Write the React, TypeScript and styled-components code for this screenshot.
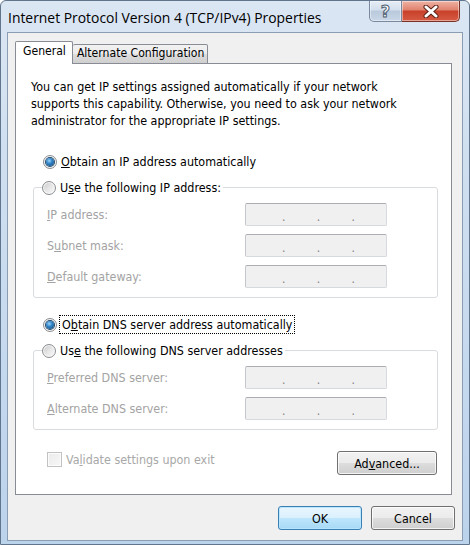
import React from "react";
import styled, { createGlobalStyle } from "styled-components";

const UI = `"DejaVu Sans Condensed", "DejaVu Sans", Tahoma, sans-serif`;

const Global = createGlobalStyle`
  html, body { margin: 0; padding: 0; background: #ffffff; }
  body { width: 470px; height: 545px; overflow: hidden; font-family: ${UI}; }
  * { box-sizing: border-box; }
`;

const Window = styled.div`
  width: 470px;
  height: 545px;
  display: flex;
  flex-direction: column;
  background: linear-gradient(180deg, #dbe6f3 0%, #cfdff0 30%, #bcd3ec 100%);
  border: 1px solid #61758d;
  border-radius: 6px 6px 0 0;
  padding: 0 6px 3px 6px;
`;

const TitleBar = styled.div`
  height: 31px;
  display: flex;
  align-items: flex-start;
  flex-shrink: 0;
`;

const Title = styled.div`
  margin: 7px 0 0 1px;
  font-family: "Open Sans", "Noto Sans", sans-serif;
  font-size: 13.9px;
  color: #000;
  white-space: nowrap;
`;

const Captions = styled.div`
  margin-left: auto;
  margin-right: 3px;
  display: flex;
`;

const CapButton = styled.div<{ $kind: "help" | "close" }>`
  height: 21px;
  width: ${(p) => (p.$kind === "help" ? "33px" : "58px")};
  display: flex;
  align-items: center;
  justify-content: center;
  border: 1px solid ${(p) => (p.$kind === "help" ? "#7a8a9e" : "#7a3226")};
  border-top: none;
  border-left: ${(p) => (p.$kind === "help" ? "1px solid #7a8a9e" : "none")};
  border-radius: ${(p) => (p.$kind === "help" ? "0 0 0 5px" : "0 0 5px 0")};
  background: ${(p) =>
    p.$kind === "help"
      ? "linear-gradient(180deg, #e6edf6 0%, #d3dfec 45%, #b9cadc 50%, #c9d7e7 100%)"
      : "linear-gradient(180deg, #eeb3a4 0%, #e0826d 45%, #c8402a 50%, #d65a42 100%)"};
  box-shadow: inset 0 0 0 1px rgba(255, 255, 255, 0.45);
`;

const HelpGlyph = styled.span`
  font-family: "DejaVu Sans", sans-serif;
  font-weight: bold;
  font-size: 16px;
  line-height: 1;
  color: #ffffff;
  -webkit-text-stroke: 1px #4d5d72;
  margin-top: 1px;
`;

const Client = styled.div`
  flex: 1;
  display: flex;
  flex-direction: column;
  background: #f0f0f0;
  border: 1px solid #8b9db3;
  padding: 9px 10px 0 7px;
`;

const Tabs = styled.div`
  display: flex;
  align-items: flex-end;
  height: 22px;
  margin-bottom: -1px;
  position: relative;
  z-index: 1;
`;

const Tab = styled.div<{ $active?: boolean }>`
  height: ${(p) => (p.$active ? "23px" : "20px")};
  padding: ${(p) => (p.$active ? "2px 6px 0 7px" : "1px 3px 0 4px")};
  font-size: 12.1px;
  color: #000;
  border: 1px solid #898c95;
  border-bottom: ${(p) => (p.$active ? "none" : "1px solid #898c95")};
  border-left: ${(p) => (p.$active ? "1px solid #898c95" : "none")};
  border-radius: 2px 2px 0 0;
  background: ${(p) =>
    p.$active ? "#ffffff" : "linear-gradient(180deg, #f2f2f2 0%, #ebebeb 50%, #dddddd 51%, #cfcfcf 100%)"};
  white-space: nowrap;
`;

const Panel = styled.div`
  flex: 1;
  background: #ffffff;
  border: 1px solid #898c95;
  padding: 14px 13px 0 15px;
  display: flex;
  flex-direction: column;
  font-size: 12.4px;
  color: #000;
`;

const Intro = styled.p`
  margin: 0;
  line-height: 17px;
`;

const RadioRow = styled.label<{ $top: number }>`
  display: flex;
  align-items: center;
  gap: 4px;
  height: 17px;
  margin-top: ${(p) => p.$top}px;
  margin-left: 12px;
  white-space: nowrap;
`;

const RadioMark = styled.span<{ $checked?: boolean }>`
  width: 14px;
  height: 14px;
  border-radius: 50%;
  border: 1px solid #8a8d91;
  flex-shrink: 0;
  display: inline-flex;
  align-items: center;
  justify-content: center;
  background: ${(p) =>
    p.$checked
      ? "radial-gradient(circle at 50% 50%, #ffffff 0%, #eeeeee 60%, #dcdcdc 100%)"
      : "linear-gradient(135deg, #c7c7c7 0%, #e6e6e6 50%, #fbfbfb 100%)"};
  box-shadow: inset 0 0 0 1px #f8f8f8;
  &::after {
    content: "";
    display: ${(p) => (p.$checked ? "block" : "none")};
    width: 8px;
    height: 8px;
    border-radius: 50%;
    background: radial-gradient(circle at 40% 35%, #9fd6fb 0%, #2f84c8 40%, #134672 100%);
    box-shadow: 0 0 0 1px #27496a;
  }
`;

const Key = styled.span`
  text-decoration: underline;
`;

const Focus = styled.span`
  outline: 1px dotted #000;
  outline-offset: 1px;
  padding: 0 1px;
`;

const Group = styled.fieldset`
  margin: 9px 0 0 2px;
  padding: 7px 50px 9px 13px;
  border: 1px solid #d9dcdf;
  border-radius: 3px;
  display: grid;
  grid-template-columns: 1fr 142px;
  row-gap: 8px;
  align-items: center;
  min-width: 0;
`;

const Legend = styled.legend`
  padding: 0 2px 0 0;
  margin-left: -5px;
  background: #ffffff;
`;

const LegendRow = styled.span`
  display: flex;
  align-items: center;
  gap: 4px;
  height: 17px;
  white-space: nowrap;
`;

const FieldLabel = styled.span`
  color: #a3a3a3;
  white-space: nowrap;
`;

const IpBox = styled.div`
  height: 23px;
  display: flex;
  align-items: center;
  padding-left: 5px;
  background: #f0f0f0;
  border: 1px solid #d6d9dd;
  border-top-color: #abadb3;
  border-left-color: #c3c6cb;
  border-radius: 2px;
  color: #7f7f7f;
`;

const Seg = styled.span`
  flex: 1;
`;

const Dot = styled.span`
  width: 4px;
  text-align: center;
  font-size: 12px;
  line-height: 1;
  margin-top: 4px;
`;

const BottomRow = styled.div`
  display: flex;
  align-items: flex-start;
  justify-content: space-between;
  margin-top: 21px;
  margin-left: 16px;
  margin-right: 1px;
`;

const CheckRow = styled.label`
  display: flex;
  align-items: center;
  gap: 4px;
  color: #a8a8a8;
  height: 16px;
`;

const CheckBox = styled.span`
  width: 15px;
  height: 15px;
  border: 1px solid #c2c2c2;
  background: linear-gradient(135deg, #ebebeb 0%, #f7f7f7 100%);
  box-shadow: inset 0 0 0 1px #fbfbfb;
`;

const Button = styled.button<{ $default?: boolean; $w: number }>`
  width: ${(p) => p.$w}px;
  height: 24px;
  font-family: ${UI};
  font-size: 12.4px;
  color: #000;
  padding: 0;
  border-radius: 3px;
  border: 1px solid ${(p) => (p.$default ? "#3c7fb1" : "#707070")};
  background: ${(p) =>
    p.$default
      ? "linear-gradient(180deg, #eaf6fd 0%, #d9f0fc 50%, #bee6fd 51%, #a7d9f5 100%)"
      : "linear-gradient(180deg, #f2f2f2 0%, #ebebeb 50%, #dddddd 51%, #cfcfcf 100%)"};
  box-shadow: inset 0 0 0 1px ${(p) => (p.$default ? "rgba(180,230,255,0.9)" : "rgba(255,255,255,0.75)")};
`;

const Footer = styled.div`
  height: 45px;
  flex-shrink: 0;
  display: flex;
  justify-content: flex-end;
  align-items: flex-start;
  gap: 9px;
  padding-top: 11px;
  margin-right: -3px;
`;

function Ip() {
  return (
    <IpBox>
      <Seg />
      <Dot>.</Dot>
      <Seg />
      <Dot>.</Dot>
      <Seg />
      <Dot>.</Dot>
      <Seg />
    </IpBox>
  );
}

export default function App() {
  return (
    <>
      <Global />
      <Window>
        <TitleBar>
          <Title>Internet Protocol Version 4 (TCP/IPv4) Properties</Title>
          <Captions>
            <CapButton $kind="help">
              <HelpGlyph>?</HelpGlyph>
            </CapButton>
            <CapButton $kind="close">
              <svg width="16" height="13" viewBox="0 0 16 13">
                <path d="M3 2 L13 11 M13 2 L3 11" stroke="#5a2218" strokeWidth="5" strokeLinecap="round" />
                <path d="M3 2 L13 11 M13 2 L3 11" stroke="#ffffff" strokeWidth="3" strokeLinecap="round" />
              </svg>
            </CapButton>
          </Captions>
        </TitleBar>
        <Client>
          <Tabs>
            <Tab $active>General</Tab>
            <Tab>Alternate Configuration</Tab>
          </Tabs>
          <Panel>
            <Intro>
              You can get IP settings assigned automatically if your network
              <br />
              supports this capability. Otherwise, you need to ask your network
              <br />
              administrator for the appropriate IP settings.
            </Intro>
            <RadioRow $top={24}>
              <RadioMark $checked />
              <span>
                <Key>O</Key>btain an IP address automatically
              </span>
            </RadioRow>
            <Group>
              <Legend>
                <LegendRow>
                  <RadioMark />
                  <span>
                    U<Key>s</Key>e the following IP address:
                  </span>
                </LegendRow>
              </Legend>
              <FieldLabel>
                <Key>I</Key>P address:
              </FieldLabel>
              <Ip />
              <FieldLabel>
                S<Key>u</Key>bnet mask:
              </FieldLabel>
              <Ip />
              <FieldLabel>
                <Key>D</Key>efault gateway:
              </FieldLabel>
              <Ip />
            </Group>
            <RadioRow $top={18}>
              <RadioMark $checked />
              <Focus>
                O<Key>b</Key>tain DNS server address automatically
              </Focus>
            </RadioRow>
            <Group>
              <Legend>
                <LegendRow>
                  <RadioMark />
                  <span>
                    Us<Key>e</Key> the following DNS server addresses
                  </span>
                </LegendRow>
              </Legend>
              <FieldLabel>
                <Key>P</Key>referred DNS server:
              </FieldLabel>
              <Ip />
              <FieldLabel>
                <Key>A</Key>lternate DNS server:
              </FieldLabel>
              <Ip />
            </Group>
            <BottomRow>
              <CheckRow>
                <CheckBox />
                <span>
                  Va<Key>l</Key>idate settings upon exit
                </span>
              </CheckRow>
              <Button $w={100}>
                Ad<Key>v</Key>anced...
              </Button>
            </BottomRow>
          </Panel>
          <Footer>
            <Button $default $w={84}>
              OK
            </Button>
            <Button $w={84}>Cancel</Button>
          </Footer>
        </Client>
      </Window>
    </>
  );
}
